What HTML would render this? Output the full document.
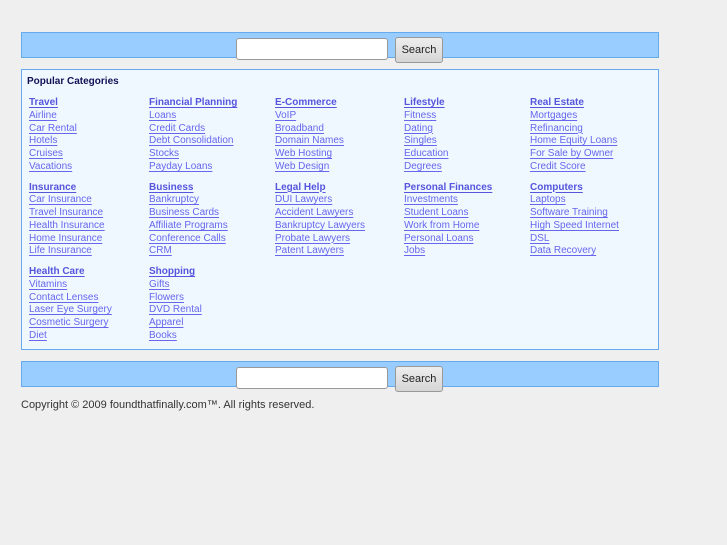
<!DOCTYPE html>
<html><head><style>
body{margin:0;background:#efefef;font-family:"Liberation Sans",Arial,sans-serif;width:727px;height:545px;position:relative;overflow:hidden}
.bar{position:absolute;left:21px;width:636px;height:24px;background:#99ccff;border:1px solid #66aaee}
.inp{position:absolute;left:214px;top:5px;width:150px;height:20px;background:#fff;border:1px solid #999;border-radius:3px}
.btn{position:absolute;left:373px;top:4px;width:46px;height:24px;background:linear-gradient(#eee,#d6d6d6);border:1px solid #999;border-radius:3px;font-size:11px;color:#222;text-align:center;line-height:24px}
.box{position:absolute;left:21px;top:69px;width:636px;height:279px;background:#f0f8ff;border:1px solid #66aaee}
.title{position:absolute;left:5px;top:6px;font-size:10px;font-weight:bold;color:#111155}
.col{position:absolute;font-size:10px;line-height:12.75px}
.col a{display:block;color:#6666ee;text-decoration:underline;text-underline-offset:2px;white-space:nowrap}
.col a.h{font-weight:bold;color:#5555dd}
.g{height:84.5px}
.copy{position:absolute;left:21px;top:399px;font-size:11px;color:#333}
</style></head><body>
<div class="bar" style="top:32px"><div class="inp"></div><div class="btn">Search</div></div>
<div class="box">
<div class="title">Popular Categories</div>
<div class="col" style="left:7px;top:27px">
<div class="g"><a class="h">Travel</a><a>Airline</a><a>Car Rental</a><a>Hotels</a><a>Cruises</a><a>Vacations</a></div>
<div class="g"><a class="h">Insurance</a><a>Car Insurance</a><a>Travel Insurance</a><a>Health Insurance</a><a>Home Insurance</a><a>Life Insurance</a></div>
<div class="g"><a class="h">Health Care</a><a>Vitamins</a><a>Contact Lenses</a><a>Laser Eye Surgery</a><a>Cosmetic Surgery</a><a>Diet</a></div>
</div>
<div class="col" style="left:127px;top:27px">
<div class="g"><a class="h">Financial Planning</a><a>Loans</a><a>Credit Cards</a><a>Debt Consolidation</a><a>Stocks</a><a>Payday Loans</a></div>
<div class="g"><a class="h">Business</a><a>Bankruptcy</a><a>Business Cards</a><a>Affiliate Programs</a><a>Conference Calls</a><a>CRM</a></div>
<div class="g"><a class="h">Shopping</a><a>Gifts</a><a>Flowers</a><a>DVD Rental</a><a>Apparel</a><a>Books</a></div>
</div>
<div class="col" style="left:253px;top:27px">
<div class="g"><a class="h">E-Commerce</a><a>VoIP</a><a>Broadband</a><a>Domain Names</a><a>Web Hosting</a><a>Web Design</a></div>
<div class="g"><a class="h">Legal Help</a><a>DUI Lawyers</a><a>Accident Lawyers</a><a>Bankruptcy Lawyers</a><a>Probate Lawyers</a><a>Patent Lawyers</a></div>
</div>
<div class="col" style="left:382px;top:27px">
<div class="g"><a class="h">Lifestyle</a><a>Fitness</a><a>Dating</a><a>Singles</a><a>Education</a><a>Degrees</a></div>
<div class="g"><a class="h">Personal Finances</a><a>Investments</a><a>Student Loans</a><a>Work from Home</a><a>Personal Loans</a><a>Jobs</a></div>
</div>
<div class="col" style="left:508px;top:27px">
<div class="g"><a class="h">Real Estate</a><a>Mortgages</a><a>Refinancing</a><a>Home Equity Loans</a><a>For Sale by Owner</a><a>Credit Score</a></div>
<div class="g"><a class="h">Computers</a><a>Laptops</a><a>Software Training</a><a>High Speed Internet</a><a>DSL</a><a>Data Recovery</a></div>
</div>
</div>
<div class="bar" style="top:361px"><div class="inp"></div><div class="btn">Search</div></div>
<div class="copy">Copyright © 2009 foundthatfinally.com™. All rights reserved.</div>
</body></html>
